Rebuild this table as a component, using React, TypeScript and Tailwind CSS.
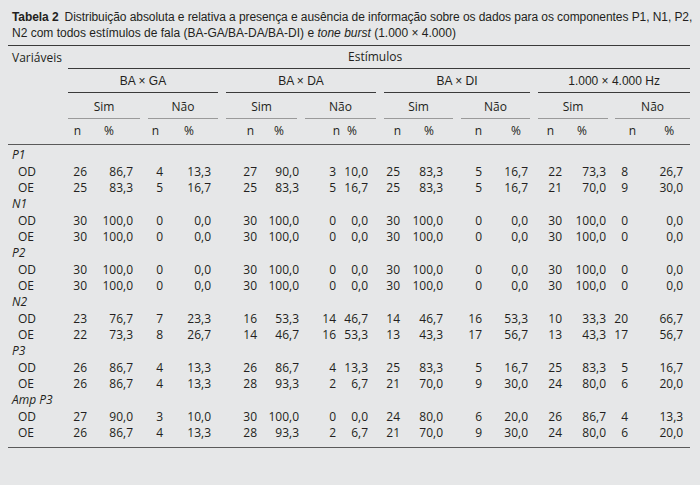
import React from 'react';

type Col = { w: string; d: string; h: string; label: 'n' | '%' };

// 16 data columns: n / % for Sim / Não in each of the 4 stimulus groups
const COLS: Col[] = [
  { w: 'w-[24px]', d: 'pr-[5px]', h: 'pr-[11px]', label: 'n' },
  { w: 'w-[52px]', d: 'pr-[11px]', h: 'pr-[30px]', label: '%' },
  { w: 'w-[32px]', d: 'pr-[13px]', h: 'pr-[17px]', label: 'n' },
  { w: 'w-[46px]', d: 'pr-[11px]', h: 'pr-[28px]', label: '%' },
  { w: 'w-[40px]', d: 'pr-[5px]', h: 'pr-[8px]', label: 'n' },
  { w: 'w-[39px]', d: 'pr-[2px]', h: 'pr-[17px]', label: '%' },
  { w: 'w-[43px]', d: 'pr-[8px]', h: 'pr-[4px]', label: 'n' },
  { w: 'w-[36px]', d: 'pr-[12px]', h: 'pr-[23px]', label: '%' },
  { w: 'w-[24px]', d: 'pr-[4px]', h: 'pr-[3px]', label: 'n' },
  { w: 'w-[53px]', d: 'pr-[14px]', h: 'pr-[23px]', label: '%' },
  { w: 'w-[31px]', d: 'pr-[6px]', h: 'pr-[6px]', label: 'n' },
  { w: 'w-[46px]', d: 'pr-[6px]', h: 'pr-[13px]', label: '%' },
  { w: 'w-[32px]', d: 'pr-[4px]', h: 'pr-[12px]', label: 'n' },
  { w: 'w-[45px]', d: 'pr-[5px]', h: 'pr-[24px]', label: '%' },
  { w: 'w-[29px]', d: 'pr-[12px]', h: 'pr-[4px]', label: 'n' },
  { w: 'w-[50px]', d: 'pr-[7px]', h: 'pr-[16px]', label: '%' },
];

const GROUPS = [
  { label: 'BA × GA', line: 'mr-[4px]' },
  { label: 'BA × DA', line: 'mx-[4px]' },
  { label: 'BA × DI', line: 'mx-[4px]' },
  { label: '1.000 × 4.000 Hz', line: 'ml-[4px]' },
];

const SUBGROUPS = [
  { label: 'Sim', line: 'mr-[4px]' },
  { label: 'Não', line: 'mx-[4px]' },
  { label: 'Sim', line: 'mx-[4px]' },
  { label: 'Não', line: 'mx-[4px]' },
  { label: 'Sim', line: 'mx-[4px]' },
  { label: 'Não', line: 'mx-[4px]' },
  { label: 'Sim', line: 'ml-[4px] mr-[3px]' },
  { label: 'Não', line: 'ml-[4px]' },
];

const FULL = ['30', '100,0', '0', '0,0', '30', '100,0', '0', '0,0', '30', '100,0', '0', '0,0', '30', '100,0', '0', '0,0'];

const SECTIONS: { name: string; od: string[]; oe: string[] }[] = [
  {
    name: 'P1',
    od: ['26', '86,7', '4', '13,3', '27', '90,0', '3', '10,0', '25', '83,3', '5', '16,7', '22', '73,3', '8', '26,7'],
    oe: ['25', '83,3', '5', '16,7', '25', '83,3', '5', '16,7', '25', '83,3', '5', '16,7', '21', '70,0', '9', '30,0'],
  },
  { name: 'N1', od: FULL, oe: FULL },
  { name: 'P2', od: FULL, oe: FULL },
  {
    name: 'N2',
    od: ['23', '76,7', '7', '23,3', '16', '53,3', '14', '46,7', '14', '46,7', '16', '53,3', '10', '33,3', '20', '66,7'],
    oe: ['22', '73,3', '8', '26,7', '14', '46,7', '16', '53,3', '13', '43,3', '17', '56,7', '13', '43,3', '17', '56,7'],
  },
  {
    name: 'P3',
    od: ['26', '86,7', '4', '13,3', '26', '86,7', '4', '13,3', '25', '83,3', '5', '16,7', '25', '83,3', '5', '16,7'],
    oe: ['26', '86,7', '4', '13,3', '28', '93,3', '2', '6,7', '21', '70,0', '9', '30,0', '24', '80,0', '6', '20,0'],
  },
  {
    name: 'Amp P3',
    od: ['27', '90,0', '3', '10,0', '30', '100,0', '0', '0,0', '24', '80,0', '6', '20,0', '26', '86,7', '4', '13,3'],
    oe: ['26', '86,7', '4', '13,3', '28', '93,3', '2', '6,7', '21', '70,0', '9', '30,0', '24', '80,0', '6', '20,0'],
  },
];

function DataRow({ label, values }: { label: string; values: string[] }) {
  return (
    <tr className="h-[16.35px]">
      <td className="p-0 pl-[10px]">{label}</td>
      {values.map((v, i) => (
        <td key={i} className={`p-0 text-right ${COLS[i].d}`}>
          {v}
        </td>
      ))}
    </tr>
  );
}

export default function App() {
  return (
    <div className="h-[485px] w-[700px] overflow-hidden bg-[#e6e7e8] text-[#231f20]">
      <p className="whitespace-nowrap pl-[12px] pt-[9px] font-['Liberation_Sans',Arial,sans-serif] text-[12px] leading-4">
        <span className="tracking-[-0.07px]">
          <b>Tabela 2</b>
          <span className="ml-[6px]">
            Distribuição absoluta e relativa a presença e ausência de informação sobre os dados para os componentes
            P1, N1, P2,
          </span>
        </span>
        <br />
        N2 com todos estímulos de fala (BA-GA/BA-DA/BA-DI) e <i>tone burst</i> (1.000 × 4.000)
      </p>

      <table className="ml-[8px] mt-[4px] w-[682px] table-fixed border-collapse border-t-[1.5px] border-[#3a3a3a] font-['Open_Sans',sans-serif] text-[12px] leading-none">
        <colgroup>
          <col className="w-[60px]" />
          {COLS.map((c, i) => (
            <col key={i} className={c.w} />
          ))}
        </colgroup>
        <thead>
          <tr className="h-[23px]">
            <td rowSpan={4} className="border-b border-[#5a5a5a] p-0 pl-[4px] pt-[6px] align-top">
              Variáveis
            </td>
            <td colSpan={16} className="border-b border-[#3a3a3a] p-0 pr-[8px] text-center">
              Estímulos
            </td>
          </tr>
          <tr>
            {GROUPS.map((g) => (
              <td key={g.label} colSpan={4} className="p-0">
                <div
                  className={`flex h-[24px] items-center justify-center border-b border-[#3a3a3a] font-['Liberation_Sans',Arial,sans-serif] ${g.line}`}
                >
                  {g.label}
                </div>
              </td>
            ))}
          </tr>
          <tr>
            {SUBGROUPS.map((s, i) => (
              <td key={i} colSpan={2} className="p-0">
                <div className={`flex h-[26px] items-center justify-center border-b border-[#9a9a9a] pt-[2px] ${s.line}`}>
                  {s.label}
                </div>
              </td>
            ))}
          </tr>
          <tr className="h-[25px]">
            {COLS.map((c, i) => (
              <td key={i} className={`border-b border-[#5a5a5a] p-0 text-right ${c.h}`}>
                {c.label}
              </td>
            ))}
          </tr>
        </thead>
        <tbody>
          <tr className="h-[3px]">
            <td colSpan={17} className="p-0" />
          </tr>
          {SECTIONS.map((s) => (
            <React.Fragment key={s.name}>
              <tr className="h-[16.35px]">
                <td colSpan={17} className="p-0 pl-[4px] italic">
                  {s.name}
                </td>
              </tr>
              <DataRow label="OD" values={s.od} />
              <DataRow label="OE" values={s.oe} />
            </React.Fragment>
          ))}
          <tr className="h-[6px]">
            <td colSpan={17} className="border-b border-[#5a5a5a] p-0" />
          </tr>
        </tbody>
      </table>
    </div>
  );
}
